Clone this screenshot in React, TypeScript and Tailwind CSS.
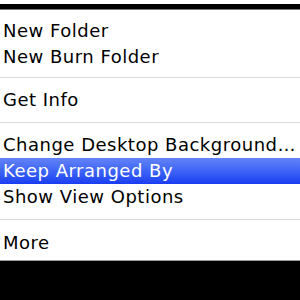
export default function App() {
  const Row = ({ label, active }: { label: string; active?: boolean }) => (
    <div
      className={
        active
          ? "h-[26px] pl-[3px] leading-[26px] text-white bg-gradient-to-b from-[#6483f7] to-[#1a3cf2] whitespace-nowrap"
          : "h-[26px] pl-[3px] leading-[26px] text-black whitespace-nowrap"
      }
    >
      {label}
    </div>
  );

  return (
    <div
      className="w-[300px] h-[300px] bg-white overflow-hidden flex flex-col text-[18px] tracking-[0.5px]"
      style={{ fontFamily: '"DejaVu Sans", sans-serif' }}
    >
      <div className="h-[4px] bg-white" />
      <div className="h-[5px] bg-black" />
      <div className="h-px bg-[#7a7a7a]" />
      <div className="pt-[8px]">
        <Row label="New Folder" />
        <Row label="New Burn Folder" />
      </div>
      <div className="mt-[7px] mb-[9px] h-px bg-[#d9d9d9]" />
      <Row label="Get Info" />
      <div className="mt-[9px] mb-[9px] h-px bg-[#d9d9d9]" />
      <Row label="Change Desktop Background…" />
      <Row label="Keep Arranged By" active />
      <Row label="Show View Options" />
      <div className="mt-[9px] mb-[10px] h-px bg-[#d9d9d9]" />
      <Row label="More" />
      <div className="mt-[4px] h-px bg-[#9a9a9a]" />
      <div className="flex-1 bg-black" />
    </div>
  );
}
